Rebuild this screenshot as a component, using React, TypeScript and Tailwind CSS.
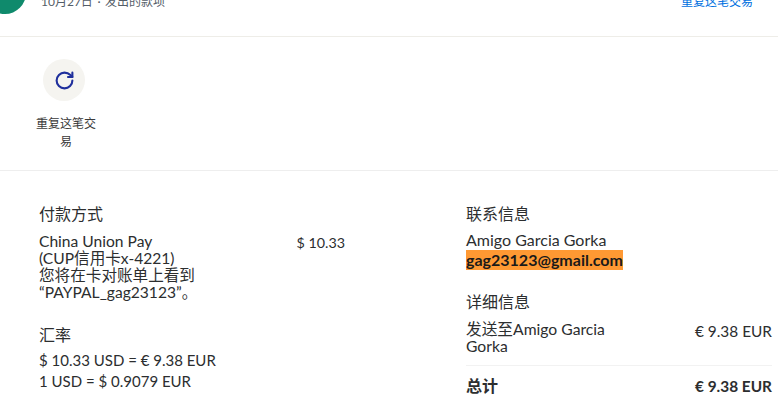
import React from 'react';
import { RotateCw } from 'lucide-react';

const App: React.FC = () => {
  return (
    <div className="h-[400px] w-[778px] overflow-hidden bg-white text-base text-[#2c2e2f] font-['Lato','Noto_Sans_CJK_SC',sans-serif]">
      {/* header, scrolled partly out of view */}
      <div className="flex h-[37px] items-end justify-between border-b border-[#eeede8] pb-[25px]">
        <div className="flex items-end">
          <div className="-ml-4 -mb-[3px] h-[42px] w-[42px] shrink-0 rounded-full bg-[#0f8a6c]" />
          <span className="ml-[15px] text-xs leading-[18px] text-[#545d68]">
            10月27日 <span className="mx-[1.5px]">·</span> 发出的款项
          </span>
        </div>
        <span className="mr-[25px] text-xs leading-[18px] text-[#0070e0]">重复这笔交易</span>
      </div>

      {/* actions */}
      <div className="h-[134px] border-b border-[#eeeeee] pl-[31px] pt-[22px]">
        <div className="flex w-[70px] flex-col items-center">
          <div className="ml-[12px] flex h-[42px] w-[42px] items-center justify-center self-start rounded-full bg-[#f5f4f0]">
            <RotateCw size={21} strokeWidth={2.4} className="text-[#1f2f9c]" />
          </div>
          <span className="mt-[14px] w-[62px] text-center text-xs leading-[18px] text-[#3a3a3a]">重复这笔交易</span>
        </div>
      </div>

      {/* details */}
      <div className="flex pl-[39px] pt-[33px]">
        <div className="w-[306px]">
          <h3 className="text-base font-normal leading-[20px]">付款方式</h3>
          <div className="mt-[9px] flex justify-between">
            <p className="w-[190px] text-[15.6px] leading-[17px]">
              China Union Pay
              <br />
              (CUP信用卡x-4221)
              <br />
              您将在卡对账单上看到
              <br />
              “PAYPAL_gag23123”。
            </p>
            <span className="text-[14.3px] leading-[20px]">$ 10.33</span>
          </div>
          <h3 className="mt-[24px] text-base font-normal leading-[20px]">汇率</h3>
          <p className="mt-[5px] text-[15px] leading-[21px]">$ 10.33 USD = € 9.38 EUR</p>
          <p className="text-[15px] leading-[21px]">1 USD = $ 0.9079 EUR</p>
        </div>

        <div className="ml-[121px] w-[306px]">
          <h3 className="text-base font-normal leading-[20px]">联系信息</h3>
          <p className="mt-[6px] leading-[20px]">Amigo Garcia Gorka</p>
          <p className="leading-[20px]">
            <span className="inline-block bg-[#ff9933] font-bold text-[#1a1a1a]">gag23123@gmail.com</span>
          </p>
          <h3 className="mt-[22px] text-base font-normal leading-[20px]">详细信息</h3>
          <div className="mt-[9px] flex justify-between border-b border-[#f2f2f2] pb-[10px]">
            <p className="w-[150px] text-[15.7px] leading-[17px]">发送至Amigo Garcia Gorka</p>
            <span className="text-[15.4px] leading-[20px]">€ 9.38 EUR</span>
          </div>
          <div className="mt-[10px] flex justify-between font-bold leading-[20px]">
            <span>总计</span>
            <span className="text-[15.4px]">€ 9.38 EUR</span>
          </div>
        </div>
      </div>
    </div>
  );
};

export default App;
